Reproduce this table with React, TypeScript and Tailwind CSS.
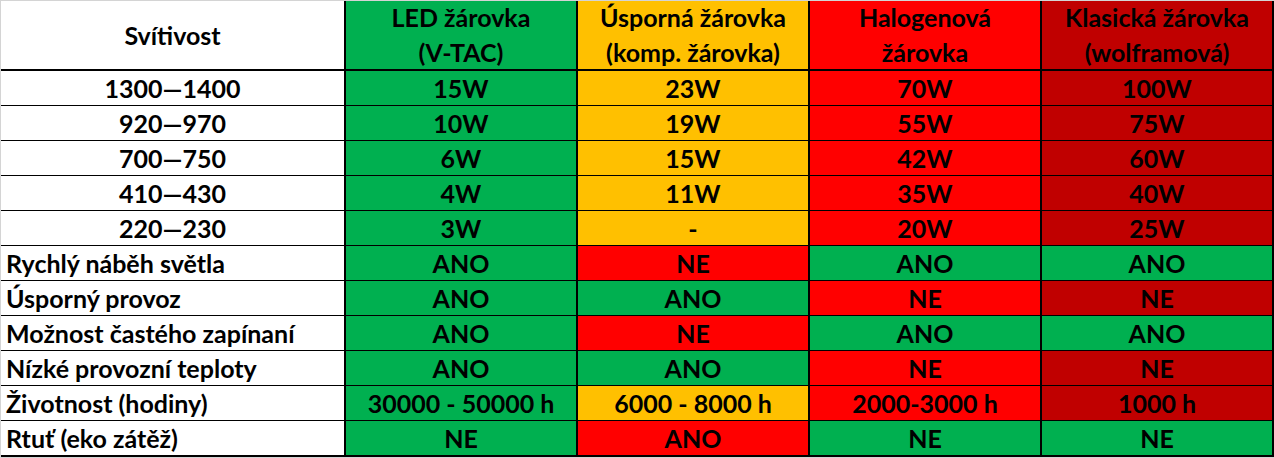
const GREEN = 'bg-[#00b050]';
const YELLOW = 'bg-[#ffc000]';
const RED = 'bg-[#ff0000]';
const DARK = 'bg-[#c00000]';

const headers = [
  { lines: ['LED žárovka', '(V-TAC)'], bg: GREEN },
  { lines: ['Úsporná žárovka', '(komp. žárovka)'], bg: YELLOW },
  { lines: ['Halogenová', 'žárovka'], bg: RED },
  { lines: ['Klasická žárovka', '(wolframová)'], bg: DARK },
];

type Row = { label: string; left?: boolean; cells: [string, string][] };

const rows: Row[] = [
  { label: '1300—1400', cells: [['15W', GREEN], ['23W', YELLOW], ['70W', RED], ['100W', DARK]] },
  { label: '920—970', cells: [['10W', GREEN], ['19W', YELLOW], ['55W', RED], ['75W', DARK]] },
  { label: '700—750', cells: [['6W', GREEN], ['15W', YELLOW], ['42W', RED], ['60W', DARK]] },
  { label: '410—430', cells: [['4W', GREEN], ['11W', YELLOW], ['35W', RED], ['40W', DARK]] },
  { label: '220—230', cells: [['3W', GREEN], ['-', YELLOW], ['20W', RED], ['25W', DARK]] },
  { label: 'Rychlý náběh světla', left: true, cells: [['ANO', GREEN], ['NE', RED], ['ANO', GREEN], ['ANO', GREEN]] },
  { label: 'Úsporný provoz', left: true, cells: [['ANO', GREEN], ['ANO', GREEN], ['NE', RED], ['NE', DARK]] },
  { label: 'Možnost častého zapínaní', left: true, cells: [['ANO', GREEN], ['NE', RED], ['ANO', GREEN], ['ANO', GREEN]] },
  { label: 'Nízké provozní teploty', left: true, cells: [['ANO', GREEN], ['ANO', GREEN], ['NE', RED], ['NE', DARK]] },
  { label: 'Životnost (hodiny)', left: true, cells: [['30000 - 50000 h', GREEN], ['6000 - 8000 h', YELLOW], ['2000-3000 h', RED], ['1000 h', DARK]] },
  { label: 'Rtuť (eko zátěž)', left: true, cells: [['NE', GREEN], ['ANO', RED], ['NE', GREEN], ['NE', GREEN]] },
];

export default function App() {
  return (
    <div
      className="w-[1274px] h-[458px] bg-white border-t border-l border-b border-[#d4d4d4] text-black font-bold text-[25px] leading-none overflow-hidden"
      style={{ fontFamily: 'Lato, "Noto Sans", sans-serif' }}
    >
      {/* header */}
      <div className="flex h-[70px] border-b-2 border-black">
        <div className="w-[345px] shrink-0 border-r-2 border-black flex items-center justify-center">
          Svítivost
        </div>
        {headers.map((h) => (
          <div
            key={h.lines[0]}
            className={`w-[232px] shrink-0 border-r-2 border-black flex flex-col items-center justify-center ${h.bg}`}
          >
            {h.lines.map((l) => (
              <div key={l} className="leading-[35px]">{l}</div>
            ))}
          </div>
        ))}
      </div>

      {/* body */}
      {rows.map((r, i) => (
        <div
          key={r.label}
          className={`flex ${i === rows.length - 1 ? 'h-[36px] border-b-2' : 'h-[35px] border-b'} border-black`}
        >
          <div
            className={`w-[345px] shrink-0 border-r-2 border-black flex items-center ${r.left ? 'justify-start pl-[5px]' : 'justify-center'}`}
          >
            {r.label}
          </div>
          {r.cells.map(([v, bg], j) => (
            <div
              key={j}
              className={`w-[232px] shrink-0 border-r-2 border-black flex items-center justify-center ${bg}`}
            >
              {v}
            </div>
          ))}
        </div>
      ))}
    </div>
  );
}
